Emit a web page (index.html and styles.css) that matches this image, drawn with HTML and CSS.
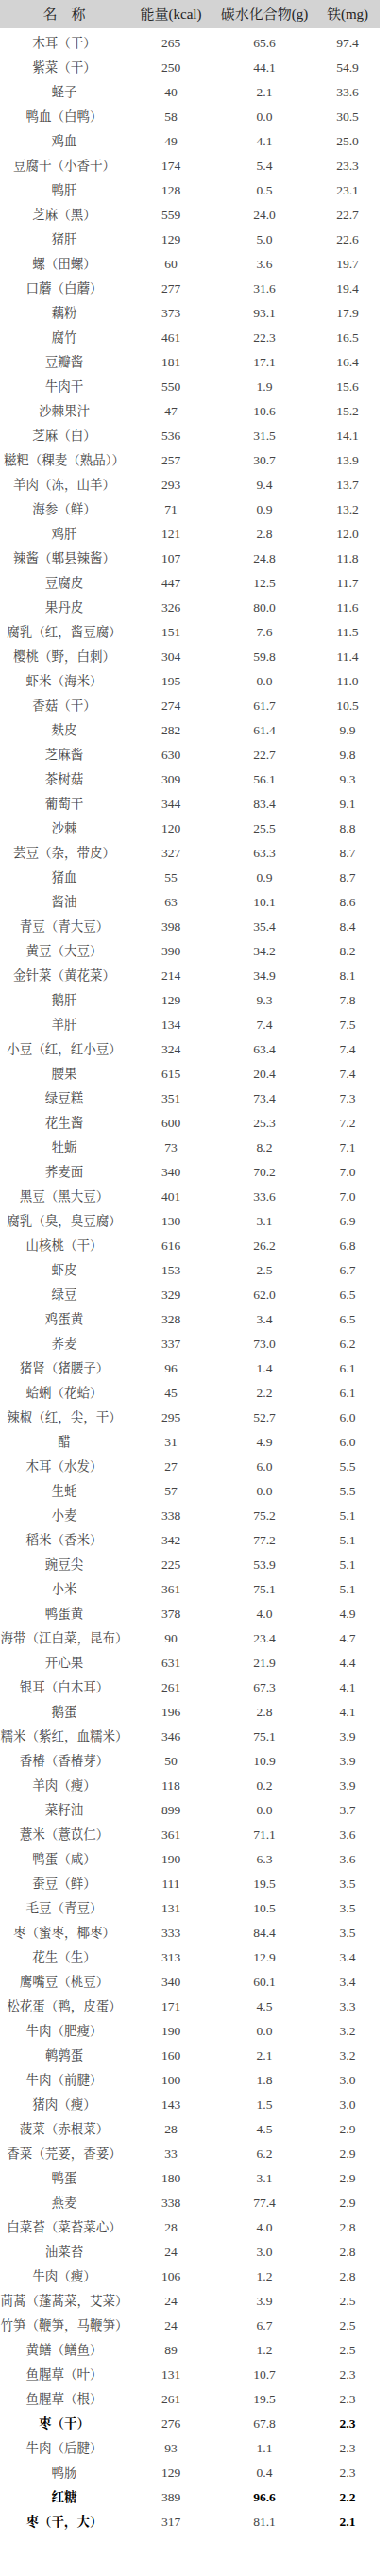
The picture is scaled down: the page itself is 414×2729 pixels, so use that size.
FILE: index.html
```html
<!DOCTYPE html>
<html lang="zh-CN">
<head>
<meta charset="utf-8">
<title>食物铁含量表</title>
<link rel="stylesheet" href="styles.css">
</head>
<body>
<table class="nutri">
<colgroup><col class="c-name"><col class="c-kcal"><col class="c-carb"><col class="c-fe"></colgroup>
<thead>
<tr><th>名　称</th><th>能量(kcal)</th><th>碳水化合物(g)</th><th>铁(mg)</th></tr>
</thead>
<tbody>
<tr><td>木耳（干）</td><td>265</td><td>65.6</td><td>97.4</td></tr>
<tr><td>紫菜（干）</td><td>250</td><td>44.1</td><td>54.9</td></tr>
<tr><td>蛏子</td><td>40</td><td>2.1</td><td>33.6</td></tr>
<tr><td>鸭血（白鸭）</td><td>58</td><td>0.0</td><td>30.5</td></tr>
<tr><td>鸡血</td><td>49</td><td>4.1</td><td>25.0</td></tr>
<tr><td>豆腐干（小香干）</td><td>174</td><td>5.4</td><td>23.3</td></tr>
<tr><td>鸭肝</td><td>128</td><td>0.5</td><td>23.1</td></tr>
<tr><td>芝麻（黑）</td><td>559</td><td>24.0</td><td>22.7</td></tr>
<tr><td>猪肝</td><td>129</td><td>5.0</td><td>22.6</td></tr>
<tr><td>螺（田螺）</td><td>60</td><td>3.6</td><td>19.7</td></tr>
<tr><td>口蘑（白蘑）</td><td>277</td><td>31.6</td><td>19.4</td></tr>
<tr><td>藕粉</td><td>373</td><td>93.1</td><td>17.9</td></tr>
<tr><td>腐竹</td><td>461</td><td>22.3</td><td>16.5</td></tr>
<tr><td>豆瓣酱</td><td>181</td><td>17.1</td><td>16.4</td></tr>
<tr><td>牛肉干</td><td>550</td><td>1.9</td><td>15.6</td></tr>
<tr><td>沙棘果汁</td><td>47</td><td>10.6</td><td>15.2</td></tr>
<tr><td>芝麻（白）</td><td>536</td><td>31.5</td><td>14.1</td></tr>
<tr><td>糍粑（稞麦（熟品））</td><td>257</td><td>30.7</td><td>13.9</td></tr>
<tr><td>羊肉（冻，山羊）</td><td>293</td><td>9.4</td><td>13.7</td></tr>
<tr><td>海参（鲜）</td><td>71</td><td>0.9</td><td>13.2</td></tr>
<tr><td>鸡肝</td><td>121</td><td>2.8</td><td>12.0</td></tr>
<tr><td>辣酱（郫县辣酱）</td><td>107</td><td>24.8</td><td>11.8</td></tr>
<tr><td>豆腐皮</td><td>447</td><td>12.5</td><td>11.7</td></tr>
<tr><td>果丹皮</td><td>326</td><td>80.0</td><td>11.6</td></tr>
<tr><td>腐乳（红，酱豆腐）</td><td>151</td><td>7.6</td><td>11.5</td></tr>
<tr><td>樱桃（野，白刺）</td><td>304</td><td>59.8</td><td>11.4</td></tr>
<tr><td>虾米（海米）</td><td>195</td><td>0.0</td><td>11.0</td></tr>
<tr><td>香菇（干）</td><td>274</td><td>61.7</td><td>10.5</td></tr>
<tr><td>麸皮</td><td>282</td><td>61.4</td><td>9.9</td></tr>
<tr><td>芝麻酱</td><td>630</td><td>22.7</td><td>9.8</td></tr>
<tr><td>茶树菇</td><td>309</td><td>56.1</td><td>9.3</td></tr>
<tr><td>葡萄干</td><td>344</td><td>83.4</td><td>9.1</td></tr>
<tr><td>沙棘</td><td>120</td><td>25.5</td><td>8.8</td></tr>
<tr><td>芸豆（杂，带皮）</td><td>327</td><td>63.3</td><td>8.7</td></tr>
<tr><td>猪血</td><td>55</td><td>0.9</td><td>8.7</td></tr>
<tr><td>酱油</td><td>63</td><td>10.1</td><td>8.6</td></tr>
<tr><td>青豆（青大豆）</td><td>398</td><td>35.4</td><td>8.4</td></tr>
<tr><td>黄豆（大豆）</td><td>390</td><td>34.2</td><td>8.2</td></tr>
<tr><td>金针菜（黄花菜）</td><td>214</td><td>34.9</td><td>8.1</td></tr>
<tr><td>鹅肝</td><td>129</td><td>9.3</td><td>7.8</td></tr>
<tr><td>羊肝</td><td>134</td><td>7.4</td><td>7.5</td></tr>
<tr><td>小豆（红，红小豆）</td><td>324</td><td>63.4</td><td>7.4</td></tr>
<tr><td>腰果</td><td>615</td><td>20.4</td><td>7.4</td></tr>
<tr><td>绿豆糕</td><td>351</td><td>73.4</td><td>7.3</td></tr>
<tr><td>花生酱</td><td>600</td><td>25.3</td><td>7.2</td></tr>
<tr><td>牡蛎</td><td>73</td><td>8.2</td><td>7.1</td></tr>
<tr><td>荞麦面</td><td>340</td><td>70.2</td><td>7.0</td></tr>
<tr><td>黑豆（黑大豆）</td><td>401</td><td>33.6</td><td>7.0</td></tr>
<tr><td>腐乳（臭，臭豆腐）</td><td>130</td><td>3.1</td><td>6.9</td></tr>
<tr><td>山核桃（干）</td><td>616</td><td>26.2</td><td>6.8</td></tr>
<tr><td>虾皮</td><td>153</td><td>2.5</td><td>6.7</td></tr>
<tr><td>绿豆</td><td>329</td><td>62.0</td><td>6.5</td></tr>
<tr><td>鸡蛋黄</td><td>328</td><td>3.4</td><td>6.5</td></tr>
<tr><td>荞麦</td><td>337</td><td>73.0</td><td>6.2</td></tr>
<tr><td>猪肾（猪腰子）</td><td>96</td><td>1.4</td><td>6.1</td></tr>
<tr><td>蛤蜊（花蛤）</td><td>45</td><td>2.2</td><td>6.1</td></tr>
<tr><td>辣椒（红，尖，干）</td><td>295</td><td>52.7</td><td>6.0</td></tr>
<tr><td>醋</td><td>31</td><td>4.9</td><td>6.0</td></tr>
<tr><td>木耳（水发）</td><td>27</td><td>6.0</td><td>5.5</td></tr>
<tr><td>生蚝</td><td>57</td><td>0.0</td><td>5.5</td></tr>
<tr><td>小麦</td><td>338</td><td>75.2</td><td>5.1</td></tr>
<tr><td>稻米（香米）</td><td>342</td><td>77.2</td><td>5.1</td></tr>
<tr><td>豌豆尖</td><td>225</td><td>53.9</td><td>5.1</td></tr>
<tr><td>小米</td><td>361</td><td>75.1</td><td>5.1</td></tr>
<tr><td>鸭蛋黄</td><td>378</td><td>4.0</td><td>4.9</td></tr>
<tr><td>海带（江白菜，昆布）</td><td>90</td><td>23.4</td><td>4.7</td></tr>
<tr><td>开心果</td><td>631</td><td>21.9</td><td>4.4</td></tr>
<tr><td>银耳（白木耳）</td><td>261</td><td>67.3</td><td>4.1</td></tr>
<tr><td>鹅蛋</td><td>196</td><td>2.8</td><td>4.1</td></tr>
<tr><td>糯米（紫红，血糯米）</td><td>346</td><td>75.1</td><td>3.9</td></tr>
<tr><td>香椿（香椿芽）</td><td>50</td><td>10.9</td><td>3.9</td></tr>
<tr><td>羊肉（瘦）</td><td>118</td><td>0.2</td><td>3.9</td></tr>
<tr><td>菜籽油</td><td>899</td><td>0.0</td><td>3.7</td></tr>
<tr><td>薏米（薏苡仁）</td><td>361</td><td>71.1</td><td>3.6</td></tr>
<tr><td>鸭蛋（咸）</td><td>190</td><td>6.3</td><td>3.6</td></tr>
<tr><td>蚕豆（鲜）</td><td>111</td><td>19.5</td><td>3.5</td></tr>
<tr><td>毛豆（青豆）</td><td>131</td><td>10.5</td><td>3.5</td></tr>
<tr><td>枣（蜜枣，椰枣）</td><td>333</td><td>84.4</td><td>3.5</td></tr>
<tr><td>花生（生）</td><td>313</td><td>12.9</td><td>3.4</td></tr>
<tr><td>鹰嘴豆（桃豆）</td><td>340</td><td>60.1</td><td>3.4</td></tr>
<tr><td>松花蛋（鸭，皮蛋）</td><td>171</td><td>4.5</td><td>3.3</td></tr>
<tr><td>牛肉（肥瘦）</td><td>190</td><td>0.0</td><td>3.2</td></tr>
<tr><td>鹌鹑蛋</td><td>160</td><td>2.1</td><td>3.2</td></tr>
<tr><td>牛肉（前腱）</td><td>100</td><td>1.8</td><td>3.0</td></tr>
<tr><td>猪肉（瘦）</td><td>143</td><td>1.5</td><td>3.0</td></tr>
<tr><td>菠菜（赤根菜）</td><td>28</td><td>4.5</td><td>2.9</td></tr>
<tr><td>香菜（芫荽，香荽）</td><td>33</td><td>6.2</td><td>2.9</td></tr>
<tr><td>鸭蛋</td><td>180</td><td>3.1</td><td>2.9</td></tr>
<tr><td>燕麦</td><td>338</td><td>77.4</td><td>2.9</td></tr>
<tr><td>白菜苔（菜苔菜心）</td><td>28</td><td>4.0</td><td>2.8</td></tr>
<tr><td>油菜苔</td><td>24</td><td>3.0</td><td>2.8</td></tr>
<tr><td>牛肉（瘦）</td><td>106</td><td>1.2</td><td>2.8</td></tr>
<tr><td>茼蒿（蓬蒿菜，艾菜）</td><td>24</td><td>3.9</td><td>2.5</td></tr>
<tr><td>竹笋（鞭笋，马鞭笋）</td><td>24</td><td>6.7</td><td>2.5</td></tr>
<tr><td>黄鳝（鳝鱼）</td><td>89</td><td>1.2</td><td>2.5</td></tr>
<tr><td>鱼腥草（叶）</td><td>131</td><td>10.7</td><td>2.3</td></tr>
<tr><td>鱼腥草（根）</td><td>261</td><td>19.5</td><td>2.3</td></tr>
<tr><td class="strong">枣（干）</td><td>276</td><td>67.8</td><td class="strong">2.3</td></tr>
<tr><td>牛肉（后腱）</td><td>93</td><td>1.1</td><td>2.3</td></tr>
<tr><td>鸭肠</td><td>129</td><td>0.4</td><td>2.3</td></tr>
<tr><td class="strong">红糖</td><td>389</td><td class="strong">96.6</td><td class="strong">2.2</td></tr>
<tr><td class="strong">枣（干，大）</td><td>317</td><td>81.1</td><td class="strong">2.1</td></tr>
</tbody>
</table>
</body>
</html>
```
FILE: styles.css
```css
html, body {
  margin: 0;
  padding: 0;
  background: #ffffff;
}

body {
  font-family: "Liberation Serif", "Noto Serif CJK SC", "Source Han Serif SC", "Noto Sans CJK SC", serif;
  color: #444444;
}

.nutri {
  width: 402px;
  border-collapse: collapse;
  border-spacing: 0;
  table-layout: fixed;
}

.c-name { width: 136px; }
.c-kcal { width: 90px; }
.c-carb { width: 108px; }
.c-fe { width: 68px; }

.nutri th {
  background: #d3d3d3;
  height: 27px;
  padding: 0;
  border-bottom: 3px solid #ffffff;
  font-size: 15px;
  font-weight: normal;
  line-height: 30px;
  color: #222222;
  text-align: center;
  vertical-align: middle;
  white-space: nowrap;
}

.nutri td {
  height: 26px;
  padding: 0;
  font-size: 13.5px;
  line-height: 26px;
  text-align: center;
  vertical-align: middle;
  white-space: nowrap;
}

.nutri td.strong {
  font-weight: bold;
  color: #000000;
}
```
